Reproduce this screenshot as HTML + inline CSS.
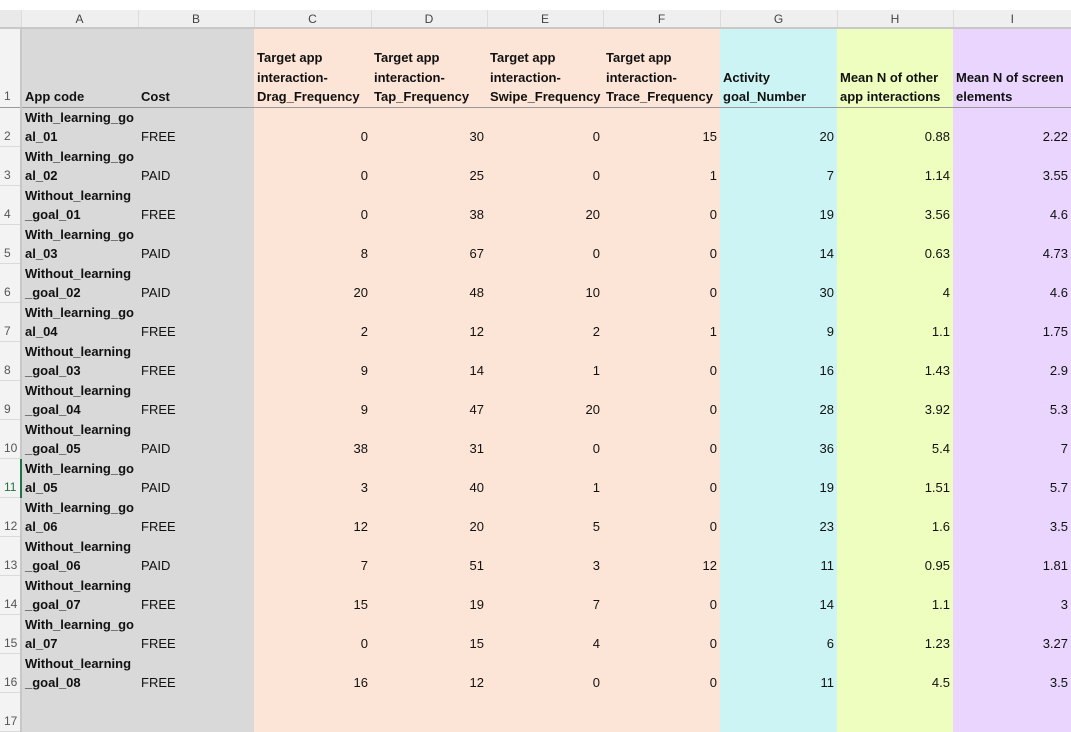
<!DOCTYPE html>
<html><head><meta charset="utf-8">
<style>
html,body{margin:0;padding:0;background:#fff;width:1071px;height:700px;overflow:hidden}
body{font-family:"Liberation Sans",sans-serif;font-size:13px;color:#111}
table{position:absolute;left:0;top:10px;border-collapse:collapse;table-layout:fixed;width:1071px}
td{padding:0 3px 0 3px;line-height:19.5px;vertical-align:bottom;white-space:nowrap;overflow:hidden;box-sizing:border-box}
tr.h td{height:18px;background:#efefef;color:#444;text-align:center;vertical-align:middle;line-height:16px;padding:0;border-left:1px solid #dcdcdc;border-bottom:2px solid #c8c8c8;font-size:12px}
tr.h td.c{background:#e9e9e9;border-left:none}
tr.r1 td{height:79px;font-weight:bold;border-bottom:1px solid #9a9a9a}
tr.d td{height:39px;text-align:right}
td.n{background:#f3f3f3;color:#555;text-align:left !important;font-weight:normal !important;padding:0 0 0 4px;border-bottom:1px solid #dadada;border-right:2px solid #c8c8c8;font-size:12px}
td.a{background:#d9d9d9;font-weight:bold;text-align:left !important}
td.b{background:#d9d9d9;text-align:left !important}
td.p{background:#fce4d6}
td.g{background:#cdf4f4}
td.y{background:#eefebf}
td.v{background:#e9d5fd}
tr.r1 td{text-align:left}
td.sel{border-right:2px solid #217346 !important;color:#217346}
</style></head><body>
<table>
<colgroup><col style="width:21px"><col style="width:117px"><col style="width:116px"><col style="width:117px"><col style="width:116px"><col style="width:116px"><col style="width:117px"><col style="width:117px"><col style="width:116px"><col style="width:118px"></colgroup>
<tr class="h"><td class="c"></td><td>A</td><td>B</td><td>C</td><td>D</td><td>E</td><td>F</td><td>G</td><td>H</td><td>I</td></tr>
<tr class="r1"><td class="n">1</td><td class="a">App code</td><td class="b" style="font-weight:bold">Cost</td><td class="p">Target app<br>interaction-<br>Drag_Frequency</td><td class="p">Target app<br>interaction-<br>Tap_Frequency</td><td class="p">Target app<br>interaction-<br>Swipe_Frequency</td><td class="p">Target app<br>interaction-<br>Trace_Frequency</td><td class="g">Activity<br>goal_Number</td><td class="y">Mean N of other<br>app interactions</td><td class="v">Mean N of screen<br>elements</td></tr>
<tr class="d"><td class="n">2</td><td class="a">With_learning_go<br>al_01</td><td class="b">FREE</td><td class="p">0</td><td class="p">30</td><td class="p">0</td><td class="p">15</td><td class="g">20</td><td class="y">0.88</td><td class="v">2.22</td></tr>
<tr class="d"><td class="n">3</td><td class="a">With_learning_go<br>al_02</td><td class="b">PAID</td><td class="p">0</td><td class="p">25</td><td class="p">0</td><td class="p">1</td><td class="g">7</td><td class="y">1.14</td><td class="v">3.55</td></tr>
<tr class="d"><td class="n">4</td><td class="a">Without_learning<br>_goal_01</td><td class="b">FREE</td><td class="p">0</td><td class="p">38</td><td class="p">20</td><td class="p">0</td><td class="g">19</td><td class="y">3.56</td><td class="v">4.6</td></tr>
<tr class="d"><td class="n">5</td><td class="a">With_learning_go<br>al_03</td><td class="b">PAID</td><td class="p">8</td><td class="p">67</td><td class="p">0</td><td class="p">0</td><td class="g">14</td><td class="y">0.63</td><td class="v">4.73</td></tr>
<tr class="d"><td class="n">6</td><td class="a">Without_learning<br>_goal_02</td><td class="b">PAID</td><td class="p">20</td><td class="p">48</td><td class="p">10</td><td class="p">0</td><td class="g">30</td><td class="y">4</td><td class="v">4.6</td></tr>
<tr class="d"><td class="n">7</td><td class="a">With_learning_go<br>al_04</td><td class="b">FREE</td><td class="p">2</td><td class="p">12</td><td class="p">2</td><td class="p">1</td><td class="g">9</td><td class="y">1.1</td><td class="v">1.75</td></tr>
<tr class="d"><td class="n">8</td><td class="a">Without_learning<br>_goal_03</td><td class="b">FREE</td><td class="p">9</td><td class="p">14</td><td class="p">1</td><td class="p">0</td><td class="g">16</td><td class="y">1.43</td><td class="v">2.9</td></tr>
<tr class="d"><td class="n">9</td><td class="a">Without_learning<br>_goal_04</td><td class="b">FREE</td><td class="p">9</td><td class="p">47</td><td class="p">20</td><td class="p">0</td><td class="g">28</td><td class="y">3.92</td><td class="v">5.3</td></tr>
<tr class="d"><td class="n">10</td><td class="a">Without_learning<br>_goal_05</td><td class="b">PAID</td><td class="p">38</td><td class="p">31</td><td class="p">0</td><td class="p">0</td><td class="g">36</td><td class="y">5.4</td><td class="v">7</td></tr>
<tr class="d"><td class="n sel">11</td><td class="a">With_learning_go<br>al_05</td><td class="b">PAID</td><td class="p">3</td><td class="p">40</td><td class="p">1</td><td class="p">0</td><td class="g">19</td><td class="y">1.51</td><td class="v">5.7</td></tr>
<tr class="d"><td class="n">12</td><td class="a">With_learning_go<br>al_06</td><td class="b">FREE</td><td class="p">12</td><td class="p">20</td><td class="p">5</td><td class="p">0</td><td class="g">23</td><td class="y">1.6</td><td class="v">3.5</td></tr>
<tr class="d"><td class="n">13</td><td class="a">Without_learning<br>_goal_06</td><td class="b">PAID</td><td class="p">7</td><td class="p">51</td><td class="p">3</td><td class="p">12</td><td class="g">11</td><td class="y">0.95</td><td class="v">1.81</td></tr>
<tr class="d"><td class="n">14</td><td class="a">Without_learning<br>_goal_07</td><td class="b">FREE</td><td class="p">15</td><td class="p">19</td><td class="p">7</td><td class="p">0</td><td class="g">14</td><td class="y">1.1</td><td class="v">3</td></tr>
<tr class="d"><td class="n">15</td><td class="a">With_learning_go<br>al_07</td><td class="b">FREE</td><td class="p">0</td><td class="p">15</td><td class="p">4</td><td class="p">0</td><td class="g">6</td><td class="y">1.23</td><td class="v">3.27</td></tr>
<tr class="d"><td class="n">16</td><td class="a">Without_learning<br>_goal_08</td><td class="b">FREE</td><td class="p">16</td><td class="p">12</td><td class="p">0</td><td class="p">0</td><td class="g">11</td><td class="y">4.5</td><td class="v">3.5</td></tr>
<tr class="d"><td class="n">17</td><td class="a"></td><td class="b"></td><td class="p"></td><td class="p"></td><td class="p"></td><td class="p"></td><td class="g"></td><td class="y"></td><td class="v"></td></tr>
</table>
</body></html>
